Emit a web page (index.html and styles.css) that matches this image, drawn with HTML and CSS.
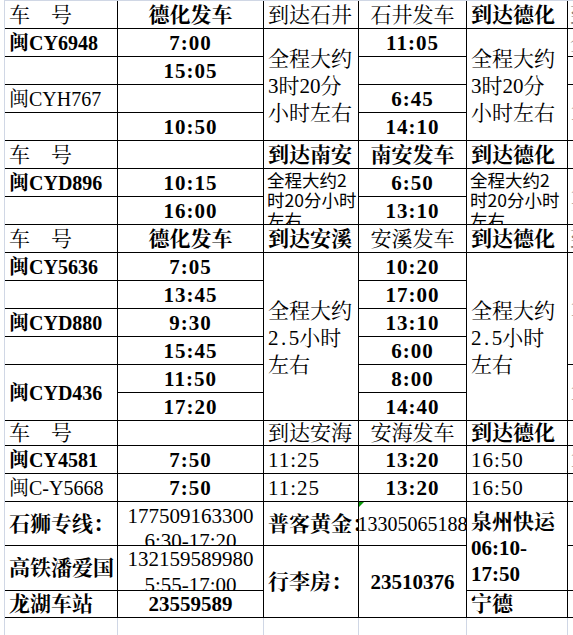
FILE: index.html
```html
<!DOCTYPE html>
<html lang="zh-CN">
<head>
<meta charset="utf-8">
<title>德化班车时刻表</title>
<link rel="stylesheet" href="styles.css">
</head>
<body>
<div class="sheet">
  <!-- r1 -->
  <div class="c l"><span>车　号</span></div>
  <div class="c m b"><span>德化发车</span></div>
  <div class="c l"><span>到达石井</span></div>
  <div class="c m"><span>石井发车</span></div>
  <div class="c l b"><span>到达德化</span></div>
  <div class="c g"><span>到</span></div>
  <!-- r2 -->
  <div class="c l b plate"><span>闽CY6948</span></div>
  <div class="c m b t"><span>7:00</span></div>
  <div class="c l rs4 note"><span>全程大约<br>3时20分<br>小时左右</span></div>
  <div class="c m b t"><span>11:05</span></div>
  <div class="c l rs4 note"><span>全程大约<br>3时20分<br>小时左右</span></div>
  <div class="c g"><span>全</span></div>
  <!-- r3 -->
  <div class="c l"></div>
  <div class="c m b t"><span>15:05</span></div>
  <div class="c m"></div>
  <div class="c g"></div>
  <!-- r4 -->
  <div class="c l plate"><span>闽CYH767</span></div>
  <div class="c m"></div>
  <div class="c m b t"><span>6:45</span></div>
  <div class="c g rs2"><span>1</span></div>
  <!-- r5 -->
  <div class="c l"></div>
  <div class="c m b t"><span>10:50</span></div>
  <div class="c m b t"><span>14:10</span></div>
  <!-- r6 -->
  <div class="c l"><span>车　号</span></div>
  <div class="c m"></div>
  <div class="c l b"><span>到达南安</span></div>
  <div class="c m b"><span>南安发车</span></div>
  <div class="c l b"><span>到达德化</span></div>
  <div class="c g"></div>
  <!-- r7 -->
  <div class="c l b plate"><span>闽CYD896</span></div>
  <div class="c m b t"><span>10:15</span></div>
  <div class="c l rs2 small"><span>全程大约2<br>时20分小时<br>左右</span></div>
  <div class="c m b t"><span>6:50</span></div>
  <div class="c l rs2 small"><span>全程大约2<br>时20分小时<br>左右</span></div>
  <div class="c g rs2"><span>1</span></div>
  <!-- r8 -->
  <div class="c l"></div>
  <div class="c m b t"><span>16:00</span></div>
  <div class="c m b t"><span>13:10</span></div>
  <!-- r9 -->
  <div class="c l"><span>车　号</span></div>
  <div class="c m b"><span>德化发车</span></div>
  <div class="c l b"><span>到达安溪</span></div>
  <div class="c m"><span>安溪发车</span></div>
  <div class="c l b"><span>到达德化</span></div>
  <div class="c g"><span>到</span></div>
  <!-- r10 -->
  <div class="c l b plate"><span>闽CY5636</span></div>
  <div class="c m b t"><span>7:05</span></div>
  <div class="c l rs6 note"><span>全程大约<br><i class="wide">2.</i>5小时<br>左右</span></div>
  <div class="c m b t"><span>10:20</span></div>
  <div class="c l rs6 note"><span>全程大约<br><i class="wide">2.</i>5小时<br>左右</span></div>
  <div class="c g rs4"><span>1</span></div>
  <!-- r11 -->
  <div class="c l"></div>
  <div class="c m b t"><span>13:45</span></div>
  <div class="c m b t"><span>17:00</span></div>
  <!-- r12 -->
  <div class="c l b plate"><span>闽CYD880</span></div>
  <div class="c m b t"><span>9:30</span></div>
  <div class="c m b t"><span>13:10</span></div>
  <!-- r13 -->
  <div class="c l"></div>
  <div class="c m b t"><span>15:45</span></div>
  <div class="c m b t"><span>6:00</span></div>
  <!-- r14 -->
  <div class="c l b plate rs2"><span>闽CYD436</span></div>
  <div class="c m b t"><span>11:50</span></div>
  <div class="c m b t"><span>8:00</span></div>
  <div class="c g rs2"><span>1</span></div>
  <!-- r15 -->
  <div class="c m b t"><span>17:20</span></div>
  <div class="c m b t"><span>14:40</span></div>
  <!-- r16 -->
  <div class="c l"><span>车　号</span></div>
  <div class="c m"></div>
  <div class="c l"><span>到达安海</span></div>
  <div class="c m"><span>安海发车</span></div>
  <div class="c l b"><span>到达德化</span></div>
  <div class="c g"></div>
  <!-- r17 -->
  <div class="c l b plate"><span>闽CY4581</span></div>
  <div class="c m b t"><span>7:50</span></div>
  <div class="c l t"><span>11:25</span></div>
  <div class="c m b t"><span>13:20</span></div>
  <div class="c l t"><span>16:50</span></div>
  <div class="c g"><span>1</span></div>
  <!-- r18 -->
  <div class="c l plate"><span>闽C-Y5668</span></div>
  <div class="c m b t"><span>7:50</span></div>
  <div class="c l t"><span>11:25</span></div>
  <div class="c m b t"><span>13:20</span></div>
  <div class="c l t"><span>16:50</span></div>
  <div class="c g"></div>
  <!-- r19 -->
  <div class="c l b"><span>石狮专线：</span></div>
  <div class="c m two"><span>177509163300<br>6:30-17:20</span></div>
  <div class="c l b"><span>普客黄金：</span></div>
  <div class="c m flag num"><span>13305065188</span></div>
  <div class="c l b rs2 note t2"><span>泉州快运<br>06:10-<br>17:50</span></div>
  <div class="c g"></div>
  <!-- r20 -->
  <div class="c l b"><span>高铁潘爱国</span></div>
  <div class="c m two two-b"><span>132159589980<br>5:55-17:00</span></div>
  <div class="c l b rs2"><span>行李房：</span></div>
  <div class="c m b rs2"><span>23510376</span></div>
  <div class="c g"></div>
  <!-- r21 -->
  <div class="c l b"><span>龙湖车站</span></div>
  <div class="c m b"><span>23559589</span></div>
  <div class="c l b"><span>宁德</span></div>
  <div class="c g"></div>
  <!-- r22 -->
  <div class="c lt"></div>
  <div class="c lt"></div>
  <div class="c lt"></div>
  <div class="c lt"></div>
  <div class="c lt"></div>
  <div class="c g lt"></div>
</div>
</body>
</html>
```

FILE: styles.css
```css
html, body {
  margin: 0;
  padding: 0;
  background: #ffffff;
  overflow: hidden;
}

body {
  width: 573px;
  height: 635px;
}

.sheet {
  display: grid;
  margin-left: 4px;
  border-left: 1px solid #d0d7e5;
  border-top: 1px solid #d0d7e5;
  grid-template-columns: 113px 146px 95px 108px 101px 5px;
  grid-template-rows: repeat(15, 28px) 25px 28px 28px 44px 45px 27px 30px;
  font-family: "Liberation Serif", "Noto Serif CJK SC", "Noto Sans CJK SC", serif;
  font-size: 21px;
  color: #000000;
}

.c {
  box-sizing: border-box;
  min-width: 0;
  border-right: 1px solid #000000;
  border-bottom: 1px solid #000000;
  display: flex;
  align-items: center;
  overflow: hidden;
  white-space: nowrap;
  line-height: 26px;
}

.c span {
  display: block;
}

.l {
  justify-content: flex-start;
  padding-left: 4px;
}

.m {
  justify-content: center;
}

.m span {
  text-align: center;
}

.b {
  font-weight: bold;
}

.t {
  letter-spacing: 1px;
}

.plate {
  font-size: 20px;
}

.rs2 { grid-row: span 2; }
.rs4 { grid-row: span 4; }
.rs6 { grid-row: span 6; }

.note {
  line-height: 27px;
  padding-top: 3px;
}

.t2 {
  line-height: 26px;
  padding-top: 4px;
}

.wide {
  font-style: normal;
  letter-spacing: 2.5px;
}

.small {
  font-family: "Noto Sans CJK SC", sans-serif;
  font-size: 17.5px;
  line-height: 20px;
  align-items: flex-start;
  padding-top: 1px;
  padding-left: 3px;
}

.two {
  align-items: flex-start;
  line-height: 25px;
  padding-top: 2px;
}

.two-b {
  line-height: 26px;
  padding-top: 0;
}

.num {
  font-size: 20px;
}

.flag {
  position: relative;
}

.flag::before {
  content: "";
  position: absolute;
  left: 0;
  top: 0;
  border-top: 5px solid #0a9a0a;
  border-right: 5px solid transparent;
}

.g {
  border-right: none;
  padding-left: 2px;
  color: #777777;
  justify-content: flex-start;
}

.lt {
  border-right-color: #d0d7e5;
  border-bottom: none;
}
```
